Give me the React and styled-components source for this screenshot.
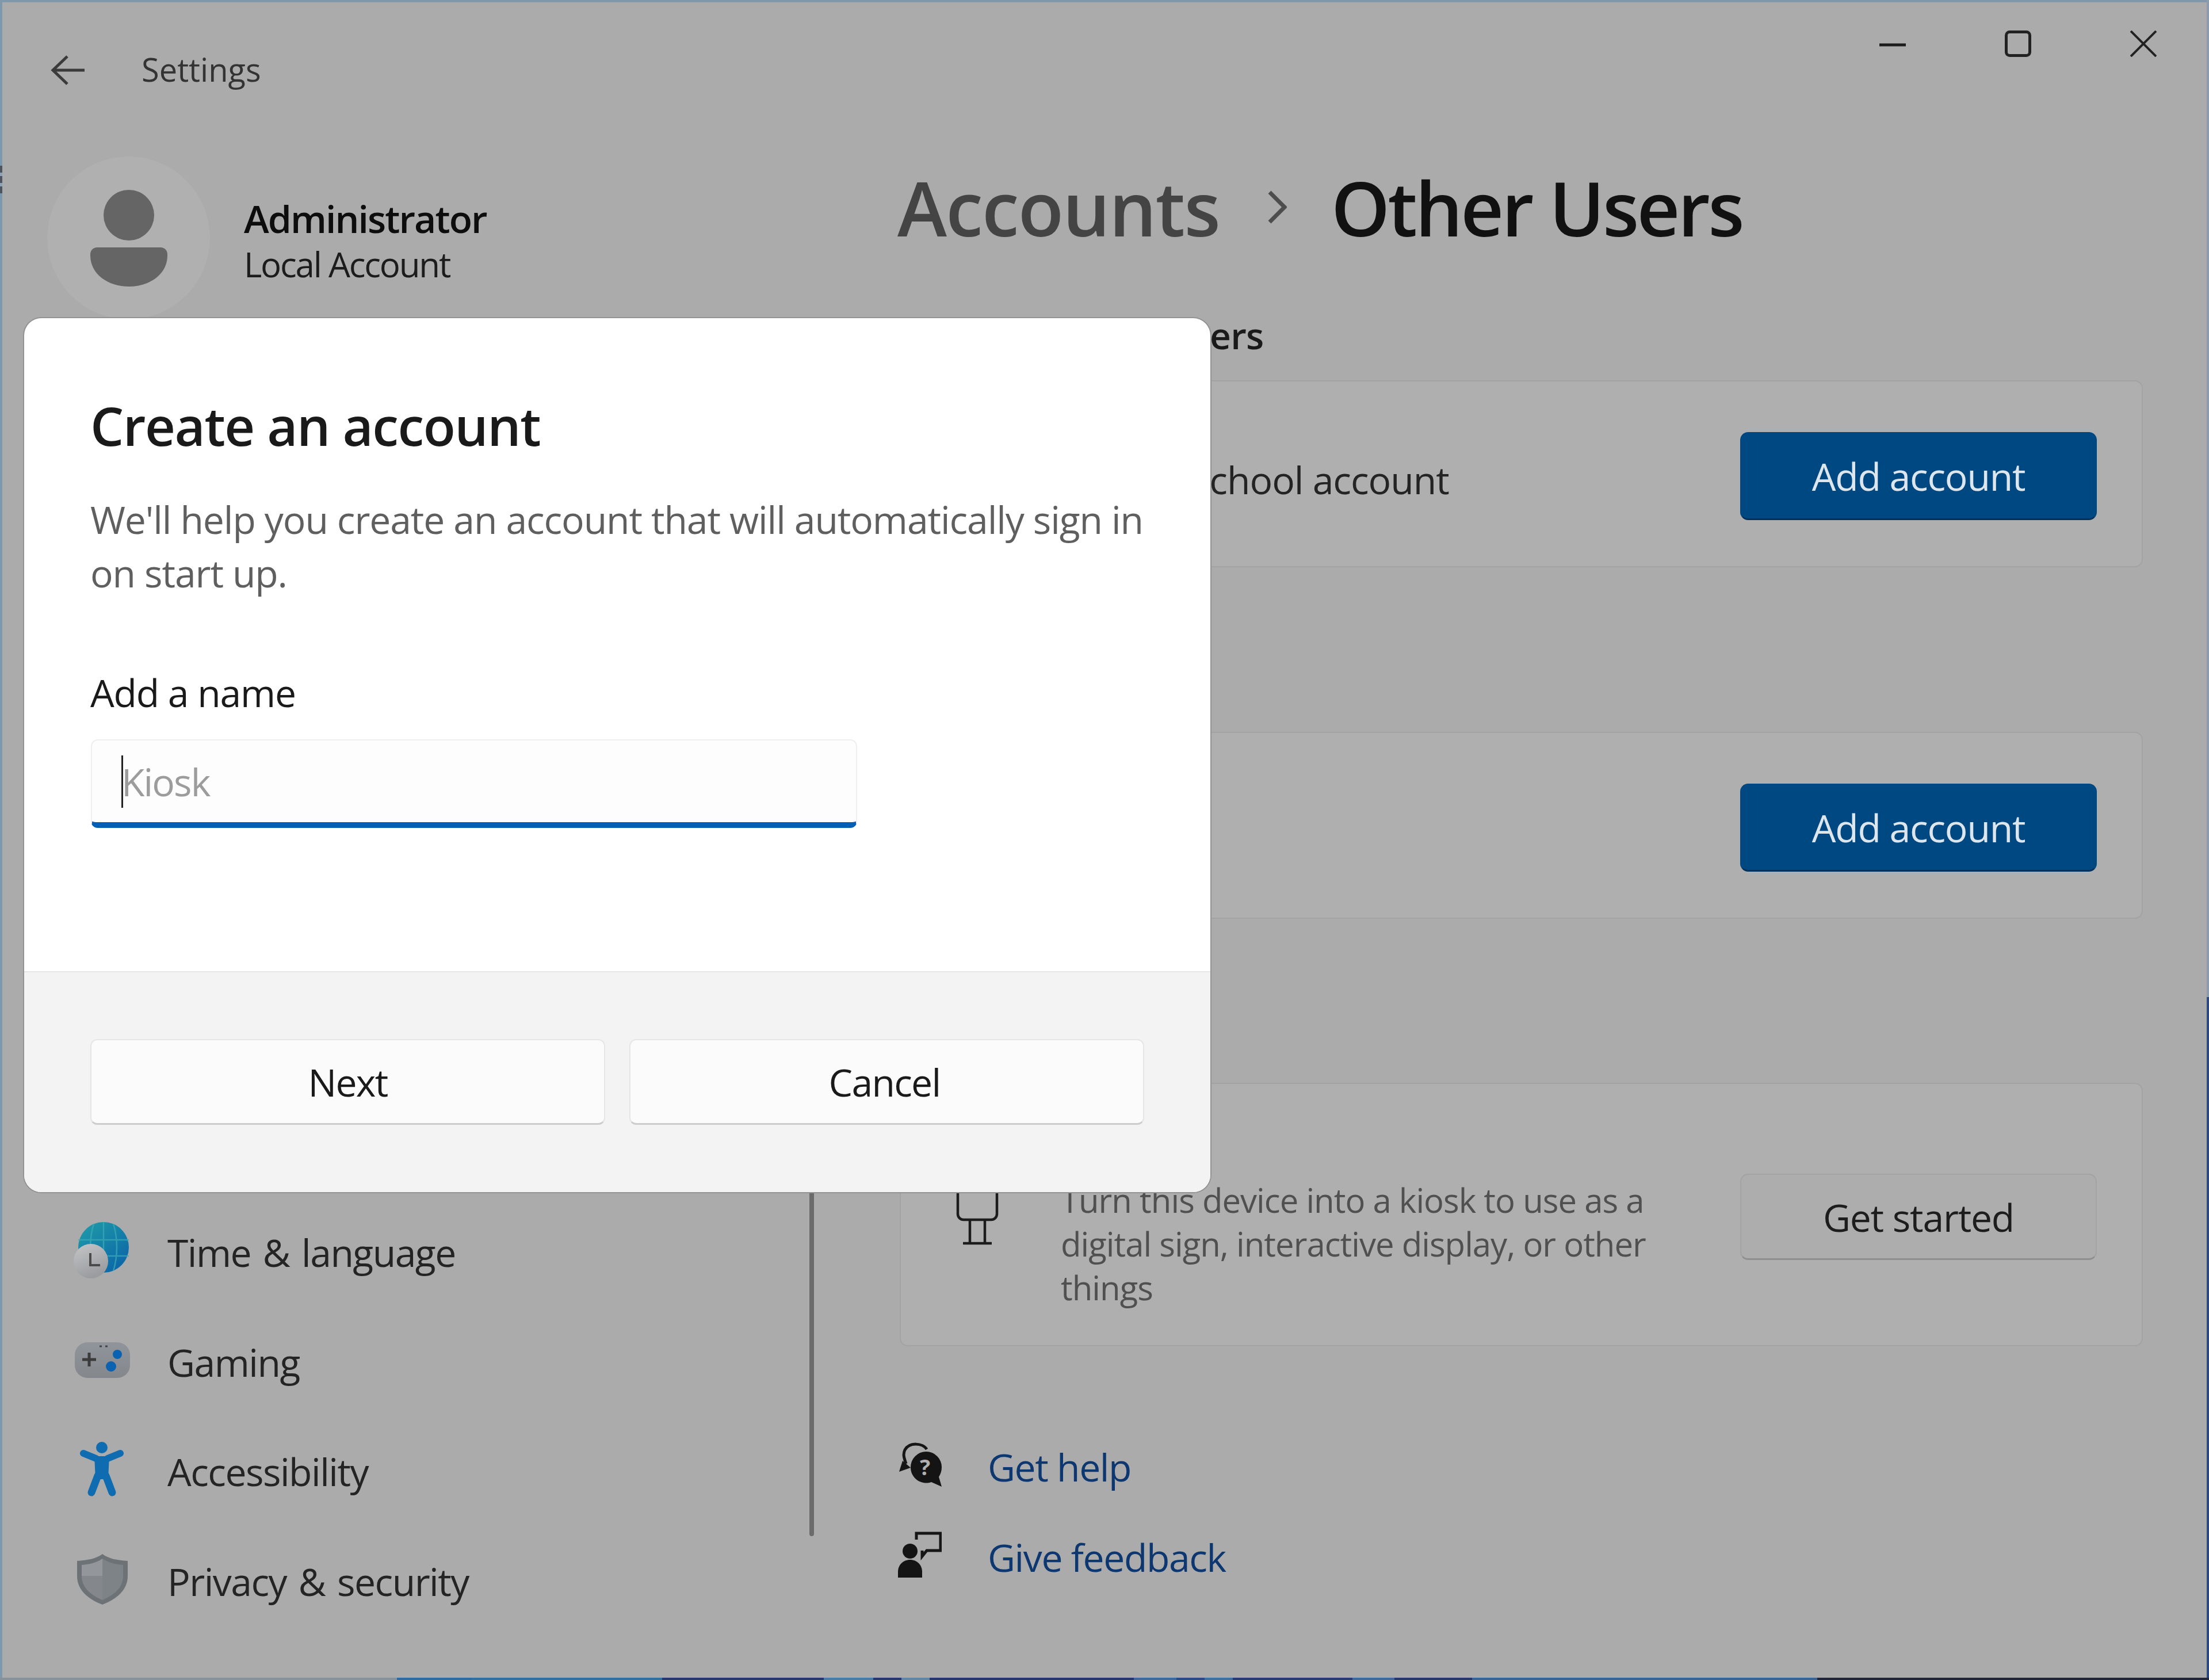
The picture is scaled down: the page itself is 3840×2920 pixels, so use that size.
import React from 'react'
import styled, { createGlobalStyle } from 'styled-components'

const GlobalStyle = createGlobalStyle`
	html, body {
		margin: 0;
		padding: 0;
		background: #ababab;
	}
	* {
		box-sizing: border-box;
	}
`

/* the wallpaper only shows as a thin strip round the window */
const Desktop = styled.div`
	width: 3840px;
	height: 2920px;
	padding: 4px;
	overflow: hidden;
	background:
		linear-gradient(to right, #87929a 0 690px, #2f6aa0 690px 820px, #31709f 820px 1151px, #27386b 1151px 1432px, #4a7da5 1432px 1518px, #27386b 1518px 1567px, #5d88aa 1567px 1616px, #25386c 1616px 1971px, #3d6a9a 1971px 2045px, #2a4a85 2045px 2094px, #4070a0 2094px 2143px, #273c70 2143px 2351px, #3f6a9a 2351px 2424px, #253868 2424px 2559px, #3a6494 2559px 3159px, #22263a 3159px) bottom / 100% 4px no-repeat,
		linear-gradient(to bottom, #8b9dad 0 1733px, #2d4a80 1733px) right / 4px 100% no-repeat,
		linear-gradient(to bottom, #7f98ab 0 288px, #4d5560 288px 300px, #8ea3b3 300px 306px, #4d5560 306px 318px, #8ea3b3 318px 324px, #4d5560 324px 336px, #7f98ab 336px) left / 4px 100% no-repeat,
		#7f98ab;
`

const Window = styled.div`
	width: 100%;
	height: 100%;
	display: flex;
	flex-direction: column;
	position: relative;
	background: #ababab;
	font-family: 'Open Sans', 'Noto Sans', sans-serif;
	color: #141414;
`

const TitleBar = styled.div`
	height: 236px;
	flex: none;
	display: flex;
	align-items: center;
	padding: 0 87px 4px 84px;
`

const AppTitle = styled.span`
	margin-left: 98px;
	font-size: 56px;
	letter-spacing: 0;
	color: #333;
`

const WindowControls = styled.div`
	margin-left: auto;
	align-self: flex-start;
	padding-top: 49px;
	display: flex;
	gap: 172px;
`

const Body = styled.div`
	flex: 1;
	min-height: 0;
	display: grid;
	grid-template-columns: 1403px 8px 1fr;
`

const Sidebar = styled.aside`
	display: flex;
	flex-direction: column;
`

const Profile = styled.div`
	display: flex;
	align-items: center;
	gap: 59px;
	padding: 32px 0 0 78px;
`

const Avatar = styled.div`
	width: 283px;
	height: 283px;
	border-radius: 50%;
	background: #b0b0b0;
	display: flex;
	align-items: center;
	justify-content: center;
`

const ProfileText = styled.div`
	margin-top: 10px;
	display: flex;
	flex-direction: column;
`

const ProfileName = styled.span`
	font-size: 66px;
	font-weight: 600;
	line-height: 80px;
	letter-spacing: -1.9px;
	color: #0d0d0d;
`

const ProfileKind = styled.span`
	font-size: 60px;
	line-height: 80px;
	letter-spacing: -2.2px;
	color: #1c1c1c;
`

const Nav = styled.nav`
	margin-top: auto;
	padding-bottom: 73px;
`

const NavItem = styled.div`
	height: 190.5px;
	display: flex;
	align-items: center;
	gap: 63px;
	padding-left: 124px;
	font-size: 66px;
	letter-spacing: -1.5px;
	word-spacing: 5px;
	color: #242424;
`

const NavIcon = styled.span`
	width: 100px;
	height: 100px;
	margin-top: -6px;
	display: flex;
	align-items: center;
	justify-content: center;
`

const ScrollThumb = styled.div`
	align-self: end;
	height: 2070px;
	margin-bottom: 246px;
	border-radius: 4px;
	background: #6b6b6b;
`

const Main = styled.main`
	padding: 0 111px 0 149px;
`

const Breadcrumb = styled.header`
	height: 160px;
	margin: 40px 0 103px -4px;
	display: flex;
	align-items: center;
	font-size: 130px;
	font-weight: 600;
`

const Crumb = styled.span`
	letter-spacing: ${p => (p.$current ? '-3.65px' : '-1.8px')};
	color: ${p => (p.$current ? '#111' : '#444')};
`

const CrumbArrow = styled.svg`
	margin: 0 77px 0 83px;
`

const SectionTitle = styled.h2`
	margin: ${p => (p.$first ? '2px' : '167.5px')} 0 38px;
	font-size: 64px;
	font-weight: 600;
	line-height: 80px;
	letter-spacing: -0.75px;
	color: #1a1a1a;
`

const Card = styled.section`
	height: ${p => (p.$tall ? '458px' : '325px')};
	padding: 8px 78px 0 ${p => (p.$tall ? '96px' : '73px')};
	display: flex;
	align-items: center;
	background: #afafaf;
	border: 2px solid #a3a3a3;
	border-radius: 14px;
`

const CardLabel = styled.span`
	margin-top: 10px;
	font-size: 66px;
	letter-spacing: -1px;
	color: #242424;
`

const CardText = styled.div`
	width: 1080px;
	margin-left: 108px;
	padding-top: 18px;
	display: flex;
	flex-direction: column;
`

const CardTitle = styled.span`
	font-size: 62px;
	line-height: 76px;
	color: #242424;
`

const CardDesc = styled.span`
	font-size: 58px;
	line-height: 76px;
	letter-spacing: -0.95px;
	color: #505050;
`

const ActionButton = styled.div`
	width: 620px;
	height: ${p => (p.$primary ? '153px' : '150px')};
	margin-left: auto;
	flex: none;
	display: flex;
	align-items: center;
	justify-content: center;
	border-radius: 14px;
	font-size: 66px;
	letter-spacing: -1.2px;
	color: ${p => (p.$primary ? '#dee6ed' : '#1d1d1d')};
	background: ${p => (p.$primary ? '#004881' : '#adadad')};
	border: 2px solid ${p => (p.$primary ? '#004881' : '#a3a3a3')};
	border-bottom: 3px solid ${p => (p.$primary ? '#00315c' : '#8f8f8f')};
`

const HelpList = styled.div`
	margin-top: 130px;
	display: flex;
	flex-direction: column;
`

const HelpRow = styled.div`
	height: 157px;
	display: flex;
	align-items: center;
	gap: 80px;
	margin-left: -3px;
`

const HelpLink = styled.a`
	font-size: 66px;
	letter-spacing: -1.4px;
	color: #0d3770;
`

const HelpIcon = styled.span`
	width: 76px;
	margin-top: -8px;
	display: flex;
`

const KioskSlot = styled.span`
	margin-top: -8px;
	display: flex;
`

/* the modal lies over the settings window */
const Dialog = styled.div`
	position: absolute;
	left: 38px;
	top: 549px;
	width: 2062px;
	height: 1519px;
	display: flex;
	flex-direction: column;
	overflow: hidden;
	border-radius: 30px;
	background: #fff;
	box-shadow: 0 0 0 2px #939393;
`

const DialogContent = styled.div`
	flex: 1;
	padding: 127px 100px 0 115px;
`

const DialogTitle = styled.h1`
	margin: 0 0 56px;
	font-size: 92px;
	font-weight: 600;
	line-height: 120px;
	letter-spacing: -1.5px;
	color: #1a1a1a;
`

const DialogText = styled.p`
	margin: 0 0 121px;
	font-size: 66px;
	line-height: 93px;
	letter-spacing: -1.08px;
	color: #5f5f5f;
`

const FieldLabel = styled.label`
	display: block;
	margin-bottom: 42px;
	font-size: 66px;
	line-height: 80px;
	letter-spacing: -1.2px;
	color: #1a1a1a;
`

const Field = styled.div`
	width: 1332px;
	height: 154px;
	margin-left: 1px;
	padding-left: 51px;
	display: flex;
	align-items: center;
	border: 2px solid #efefef;
	border-bottom: 10px solid #0060b8;
	border-radius: 12px;
	background: #fdfdfd;
`

const Caret = styled.span`
	width: 3px;
	height: 91px;
	margin-right: -3px;
	background: #222;
`

const Placeholder = styled.span`
	font-size: 66px;
	letter-spacing: -1.9px;
	color: #9c9c9c;
`

const DialogFooter = styled.div`
	height: 384px;
	flex: none;
	padding: 116px 115px 0;
	display: grid;
	grid-template-columns: 1fr 1fr;
	align-items: start;
	gap: 42px;
	background: #f3f3f3;
	border-top: 2px solid #e5e5e5;
`

const FooterButton = styled.div`
	height: 149px;
	display: flex;
	align-items: center;
	justify-content: center;
	border: 2px solid #e6e6e6;
	border-bottom: 3px solid #cccccc;
	border-radius: 12px;
	background: #fbfbfb;
	font-size: 66px;
	letter-spacing: -1.7px;
	color: #1a1a1a;

	&:last-child {
		padding-right: 8px;
	}
`

const BackIcon = () => (
	<svg width="60" height="56" viewBox="0 0 60 56" fill="none" stroke="#3b3b3b" strokeWidth="5">
		<path d="M29 6 4 30l25 24M4 30h55" />
	</svg>
)

const MinimizeIcon = () => (
	<svg width="46" height="46" viewBox="0 0 46 46" fill="none" stroke="#1b1b1b" strokeWidth="5">
		<path d="M0 25h46" />
	</svg>
)

const MaximizeIcon = () => (
	<svg width="46" height="46" viewBox="0 0 46 46" fill="none" stroke="#222" strokeWidth="5">
		<rect x="2.5" y="2.5" width="41" height="41" rx="6" />
	</svg>
)

const CloseIcon = () => (
	<svg width="46" height="46" viewBox="0 0 46 46" fill="none" stroke="#222" strokeWidth="4">
		<path d="m1 1 44 44M45 1 1 45" />
	</svg>
)

const AvatarIcon = () => (
	<svg width="134" height="168" viewBox="0 0 134 168" fill="#656565">
		<circle cx="67" cy="44" r="44" />
		<path d="M12 100h110c7 0 12 5 12 12v2c0 32-30 54-67 54S0 146 0 114v-2c0-7 5-12 12-12z" />
	</svg>
)

const GlobeIcon = () => (
	<svg width="100" height="100" viewBox="0 0 100 100">
		<defs>
			<linearGradient id="globeFill" x1="0.1" y1="0" x2="0.9" y2="1">
				<stop offset="0" stopColor="#1f9ba8" />
				<stop offset="1" stopColor="#0a62a8" />
			</linearGradient>
			<linearGradient id="clockFill" x1="0" y1="0" x2="0.4" y2="1">
				<stop offset="0" stopColor="#c4c6c8" />
				<stop offset="1" stopColor="#9a9c9f" />
			</linearGradient>
		</defs>
		<circle cx="52" cy="45" r="44" fill="url(#globeFill)" />
		<path d="M8 32h88M8 60h88M52 1v88M35 4c-8 26-8 56 0 82M69 4c8 26 8 56 0 82" fill="none" stroke="#3aa9b4" strokeWidth="2.5" opacity=".75" />
		<circle cx="30" cy="69" r="30" fill="url(#clockFill)" />
		<path d="M29 55v21h17" fill="none" stroke="#4b4b4b" strokeWidth="4" />
	</svg>
)

const GamingIcon = () => (
	<svg width="100" height="66" viewBox="0 0 100 66">
		<defs>
			<linearGradient id="padFill" x1="0" y1="0" x2="0" y2="1">
				<stop offset="0" stopColor="#90959b" />
				<stop offset="1" stopColor="#84888d" />
			</linearGradient>
		</defs>
		<rect x="2" y="2" width="96" height="62" rx="22" fill="url(#padFill)" />
		<path d="M27 20v24M15 32h24" stroke="#3b3b3b" strokeWidth="5" />
		<path d="M45 9h4M55 9h4" stroke="#444" strokeWidth="3" />
		<circle cx="76" cy="23" r="8" fill="#0a62b0" />
		<circle cx="65" cy="44" r="9" fill="#0a62b0" />
	</svg>
)

const AccessibilityIcon = () => (
	<svg width="78" height="98" viewBox="0 0 78 98" fill="none" stroke="#0f6cb0" strokeLinecap="round">
		<circle cx="38" cy="11" r="10" fill="#0f6cb0" stroke="none" />
		<path d="M6 21 28 30M70 21 48 30" strokeWidth="12" />
		<path d="M25 26h26l-2 40H27z" fill="#0f6cb0" stroke="none" />
		<path d="M31 60 20 89M45 60l11 29" strokeWidth="13" />
	</svg>
)

const ShieldIcon = () => (
	<svg width="90" height="90" viewBox="0 0 90 90">
		<path d="M45 1c10 8 26 11 44 12v26c0 24-18 40-44 50C19 79 1 63 1 39V13c18-1 34-4 44-12z" fill="#6d7277" />
		<path d="M45 9c10 7 22 10 36 11v19c0 20-15 33-36 42z" fill="#7e8388" />
		<path d="M45 9C35 16 23 19 9 20v19h36z" fill="#93979b" />
		<path d="M9 39c0 20 15 33 36 42V39z" fill="#84888d" />
	</svg>
)

const KioskIcon = () => (
	<svg width="74" height="108" viewBox="0 0 74 108" fill="none" stroke="#1c1c1c" strokeWidth="4.5">
		<rect x="3" y="3" width="68" height="60" rx="10" />
		<path d="M24 63v41M50 63v41M12 104h50" />
	</svg>
)

const HelpGlyph = () => (
	<svg width="76" height="78" viewBox="0 0 76 78">
		<path d="M50 13C43 2 20 0 12 14c-4 8-1 15 2 24" fill="none" stroke="#161616" strokeWidth="5" />
		<path d="M2 52l6-19 14 12z" fill="#161616" />
		<path d="M22 44a27 27 0 0 1 54 0c0 7-2 12-5 17l5 17-18-8A27 27 0 0 1 22 44z" fill="#141414" />
		<text x="47" y="58" textAnchor="middle" fontSize="38" fontWeight="700" fill="#b0b0b0" fontFamily="'Open Sans', sans-serif">?</text>
	</svg>
)

const FeedbackGlyph = () => (
	<svg width="76" height="80" viewBox="0 0 76 80">
		<path d="M32 14V3h42v30H50l-8 10v-10" fill="none" stroke="#161616" strokeWidth="5" />
		<circle cx="21" cy="34" r="13" fill="#141414" />
		<path d="M0 80V70c0-12 9-21 21-21s21 9 21 21v10z" fill="#141414" />
	</svg>
)

const navItems = [
	{ label: 'Time & language', icon: <GlobeIcon /> },
	{ label: 'Gaming', icon: <GamingIcon /> },
	{ label: 'Accessibility', icon: <AccessibilityIcon /> },
	{ label: 'Privacy & security', icon: <ShieldIcon /> },
]

function App() {
	return (
		<Desktop>
			<GlobalStyle />
			<Window>
				<TitleBar>
					<BackIcon />
					<AppTitle>Settings</AppTitle>
					<WindowControls>
						<MinimizeIcon />
						<MaximizeIcon />
						<CloseIcon />
					</WindowControls>
				</TitleBar>
				<Body>
					<Sidebar>
						<Profile>
							<Avatar><AvatarIcon /></Avatar>
							<ProfileText>
								<ProfileName>Administrator</ProfileName>
								<ProfileKind>Local Account</ProfileKind>
							</ProfileText>
						</Profile>
						<Nav>
							{navItems.map(item => (
								<NavItem key={item.label}>
									<NavIcon>{item.icon}</NavIcon>
									{item.label}
								</NavItem>
							))}
						</Nav>
					</Sidebar>
					<ScrollThumb />
					<Main>
						<Breadcrumb>
							<Crumb>Accounts</Crumb>
							<CrumbArrow width="34" height="58" viewBox="0 0 34 58" fill="none" stroke="#4d4d4d" strokeWidth="7">
								<path d="m4 3 26 26L4 55" />
							</CrumbArrow>
							<Crumb $current>Other Users</Crumb>
						</Breadcrumb>
						<SectionTitle $first>Work or school users</SectionTitle>
						<Card>
							<CardLabel>Add a work or school account</CardLabel>
							<ActionButton $primary>Add account</ActionButton>
						</Card>
						<SectionTitle>Other users</SectionTitle>
						<Card>
							<CardLabel>Add other user</CardLabel>
							<ActionButton $primary>Add account</ActionButton>
						</Card>
						<SectionTitle>Set up a kiosk</SectionTitle>
						<Card $tall>
							<KioskSlot><KioskIcon /></KioskSlot>
							<CardText>
								<CardTitle>Kiosk</CardTitle>
								<CardDesc>Turn this device into a kiosk to use as a digital sign, interactive display, or other things</CardDesc>
							</CardText>
							<ActionButton>Get started</ActionButton>
						</Card>
						<HelpList>
							<HelpRow>
								<HelpIcon><HelpGlyph /></HelpIcon>
								<HelpLink>Get help</HelpLink>
							</HelpRow>
							<HelpRow>
								<HelpIcon><FeedbackGlyph /></HelpIcon>
								<HelpLink>Give feedback</HelpLink>
							</HelpRow>
						</HelpList>
					</Main>
				</Body>
				<Dialog>
					<DialogContent>
						<DialogTitle>Create an account</DialogTitle>
						<DialogText>We'll help you create an account that will automatically sign in on start up.</DialogText>
						<FieldLabel>Add a name</FieldLabel>
						<Field>
							<Caret />
							<Placeholder>Kiosk</Placeholder>
						</Field>
					</DialogContent>
					<DialogFooter>
						<FooterButton>Next</FooterButton>
						<FooterButton>Cancel</FooterButton>
					</DialogFooter>
				</Dialog>
			</Window>
		</Desktop>
	)
}

export default App
